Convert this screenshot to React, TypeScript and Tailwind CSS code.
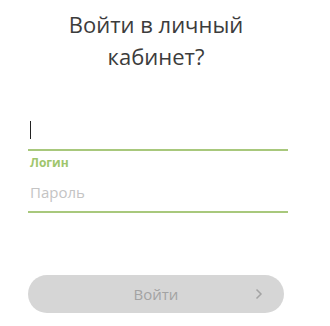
import React from "react";

export default function App() {
  return (
    <div
      className="w-[330px] h-[326px] bg-white overflow-hidden"
      style={{ fontFamily: '"Open Sans", "Noto Sans", sans-serif' }}
    >
      <h1 className="ml-[28px] w-[256px] pt-[8px] text-center text-[22px] leading-[32px] font-normal text-[#3c3c3c]">
        Войти в личный
        <br />
        кабинет?
      </h1>

      <form className="ml-[28px] w-[260px]" onSubmit={(e) => e.preventDefault()}>
        <div className="pt-[49px] pb-[10px] border-b-2 border-[#a8c87c]">
          <span className="block ml-[2px] w-[1px] h-[18px] bg-[#222]" />
        </div>
        <div className="mt-[4px] pl-[2px] text-[12px] leading-[16px] font-bold text-[#9fc66c]">
          Логин
        </div>
        <div className="mt-[11px] pb-[9px] border-b-2 border-[#a8c87c]">
          <input
            type="password"
            placeholder="Пароль"
            className="block w-full pl-[2px] h-[20px] text-[15px] leading-[20px] outline-none bg-transparent placeholder:text-[#c4c4c4]"
          />
        </div>

        <button
          type="submit"
          disabled
          className="relative mt-[62px] w-[256px] h-[38px] rounded-full bg-[#d6d6d6] text-[15px] text-[#a3a3a3] flex items-center justify-center"
        >
          Войти
          <svg
            className="absolute right-[21px] top-1/2 -translate-y-1/2"
            width="8"
            height="12"
            viewBox="0 0 8 12"
            fill="none"
          >
            <path d="M1.5 1.5 6 6l-4.5 4.5" stroke="#a3a3a3" strokeWidth="1.5" />
          </svg>
        </button>
      </form>
    </div>
  );
}
